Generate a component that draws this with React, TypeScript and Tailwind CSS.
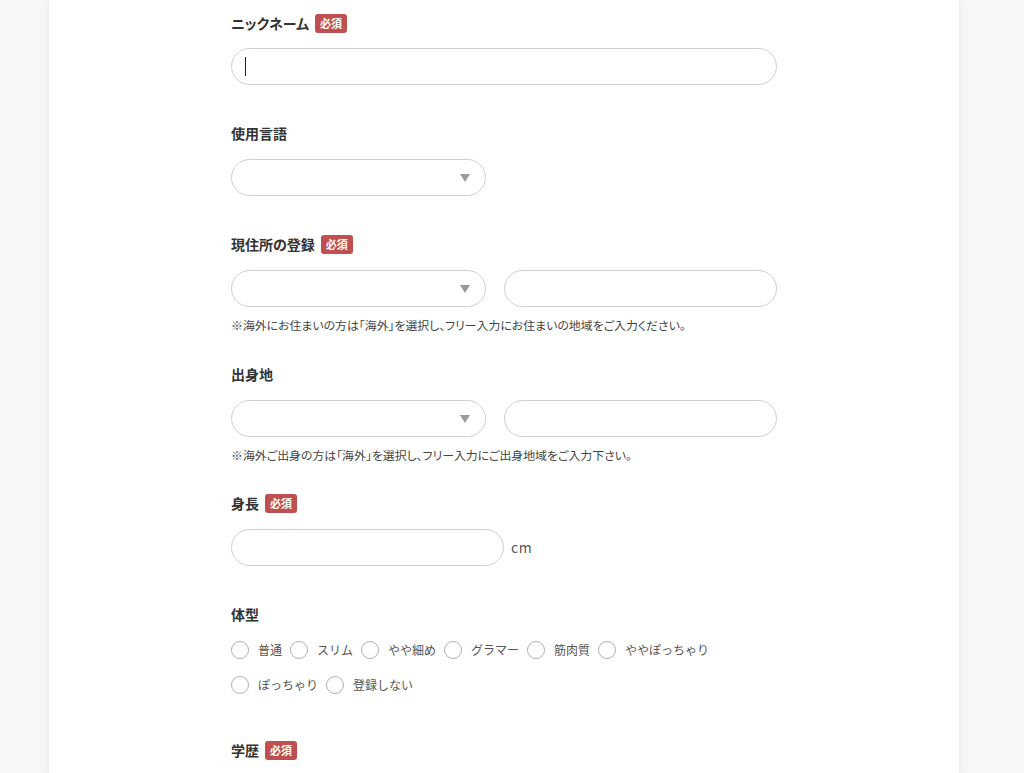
import React from "react";

const font = {
  fontFamily: '"Noto Sans CJK JP", "Noto Sans", sans-serif',
};
const palt = { fontFeatureSettings: '"palt"' };

function Badge() {
  return (
    <span className="ml-[6px] inline-flex h-[19px] w-[32px] items-center justify-center rounded-[3px] bg-[#c0504f] text-[11px] font-bold leading-none text-white">
      必須
    </span>
  );
}

function Label({ text, req, className = "" }: { text: string; req?: boolean; className?: string }) {
  return (
    <div className={`flex h-[20px] items-center text-[14px] font-bold text-[#333] ${className}`} style={palt}>
      <span>{text}</span>
      {req && <Badge />}
    </div>
  );
}

function Select({ w }: { w: string }) {
  return (
    <div className={`flex h-[37px] ${w} items-center justify-end rounded-full border border-[#cfcfcf] bg-white pr-[15px]`}>
      <svg width="10" height="8" viewBox="0 0 10 8">
        <path d="M0 0 L10 0 L5 8 Z" fill="#9a9a9a" />
      </svg>
    </div>
  );
}

function TextBox({ w, caret }: { w: string; caret?: boolean }) {
  return (
    <div className={`flex h-[37px] ${w} items-center rounded-full border border-[#cfcfcf] bg-white`}>
      {caret && <span className="ml-[13px] h-[19px] w-[1px] bg-[#222]" />}
    </div>
  );
}

function Radio({ label }: { label: string }) {
  return (
    <div className="flex h-[18px] items-center">
      <span className="h-[18px] w-[18px] rounded-full border border-[#b0b0b0] bg-white" />
      <span className="ml-[9px] mr-[8px] text-[12px] leading-[18px] text-[#555]">{label}</span>
    </div>
  );
}

function Note({ text }: { text: string }) {
  return (
    <p className="mt-[9px] h-[18px] text-[11.9px] leading-[18px] text-[#444]" style={palt}>
      {text}
    </p>
  );
}

export default function App() {
  return (
    <div className="min-h-[773px] bg-[#f7f7f7]" style={font}>
      <div className="ml-[49px] min-h-[773px] w-[910px] bg-white pl-[182px] pt-[13px] shadow-[0_0_10px_rgba(0,0,0,0.07)]">
        <Label text="ニックネーム" req className="mb-[15px]" />
        <TextBox w="w-[546px]" caret />

        <Label text="使用言語" className="mb-[16px] mt-[38px]" />
        <Select w="w-[255px]" />

        <Label text="現住所の登録" req className="mb-[16px] mt-[38px]" />
        <div className="flex gap-[18px]">
          <Select w="w-[255px]" />
          <TextBox w="w-[273px]" />
        </div>
        <Note text="※海外にお住まいの方は「海外」を選択し、フリー入力にお住まいの地域をご入力ください。" />

        <Label text="出身地" className="mb-[16px] mt-[30px]" />
        <div className="flex gap-[18px]">
          <Select w="w-[255px]" />
          <TextBox w="w-[273px]" />
        </div>
        <Note text="※海外ご出身の方は「海外」を選択し、フリー入力にご出身地域をご入力下さい。" />

        <Label text="身長" req className="mb-[16px] mt-[29px]" />
        <div className="flex items-center">
          <TextBox w="w-[273px]" />
          <span className="ml-[7px] text-[14px] tracking-[0.5px] text-[#555]">cm</span>
        </div>

        <Label text="体型" className="mb-[17px] mt-[38px]" />
        <div className="flex w-[546px] flex-wrap">
          {["普通", "スリム", "やや細め", "グラマー", "筋肉質", "ややぽっちゃり"].map((t) => (
            <Radio key={t} label={t} />
          ))}
        </div>
        <div className="mt-[17px] flex">
          {["ぽっちゃり", "登録しない"].map((t) => (
            <Radio key={t} label={t} />
          ))}
        </div>

        <Label text="学歴" req className="mt-[46px]" />
      </div>
    </div>
  );
}
